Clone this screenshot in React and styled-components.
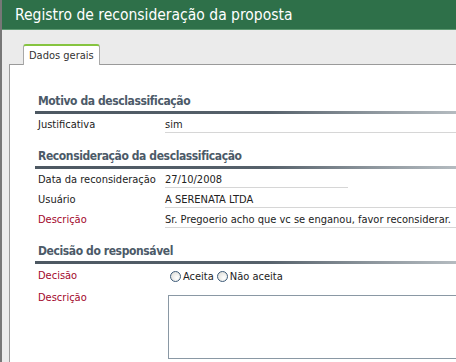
import React from "react";
import styled, { createGlobalStyle } from "styled-components";

const GlobalStyle = createGlobalStyle`
  html, body {
    margin: 0;
    padding: 0;
    background: #ebebeb;
    overflow: hidden;
  }
  body {
    font-family: "DejaVu Sans Condensed", "DejaVu Sans", sans-serif;
    font-size: 11px;
    color: #222;
  }
`;

const Window = styled.div`
  height: 362px;
  border-left: 2px solid #777;
  background: #ebebeb;
  display: flex;
  flex-direction: column;
`;

const TitleBar = styled.div`
  height: 29px;
  background: #2e7049;
  border-bottom: 1px solid #5e9a72;
  display: flex;
  align-items: center;
  padding-left: 13px;
`;

const Title = styled.h1`
  margin: 0;
  font-size: 15.5px;
  font-weight: normal;
  color: #fff;
`;

const TabStrip = styled.div`
  height: 34px;
  display: flex;
  align-items: flex-end;
  padding-left: 14px;
  margin-left: 7px;
  border-bottom: 1px solid #9a9a9a;
`;

const Tab = styled.div`
  height: 19px;
  margin-bottom: -1px;
  padding: 0 5px;
  display: flex;
  align-items: center;
  background: #fff;
  border: 1px solid #a8a8a8;
  border-top: 2px solid #86c440;
  border-bottom: none;
  border-radius: 3px 3px 0 0;
  color: #333;
`;

const Panel = styled.div`
  flex: 1;
  margin-left: 7px;
  border-left: 1px solid #9a9a9a;
  background: #fff;
  padding: 28px 0 0 25px;
`;

const Section = styled.section`
  & + & {
    margin-top: 13px;
  }
`;

const SectionTitle = styled.h2`
  margin: 0;
  padding-left: 3px;
  font-size: 12px;
  letter-spacing: -0.4px;
  line-height: 16px;
  font-weight: bold;
  color: #4c5a68;
`;

const Bar = styled.div`
  height: 3px;
  margin-top: 2px;
  margin-bottom: ${(p) => p.$after}px;
  background: linear-gradient(to right, #4d5862 0%, #56616b 55%, #8d969d 80%, #b4bbc0 100%);
`;

const Row = styled.div`
  display: flex;
  align-items: ${(p) => (p.$top ? "flex-start" : "center")};
  min-height: 20px;
  margin-top: ${(p) => p.$mt || 0}px;
`;

const Label = styled.div`
  width: 127px;
  padding-left: 3px;
  line-height: 14px;
  color: ${(p) => (p.$required ? "#a3072c" : "#222")};
`;

const Value = styled.div`
  flex: ${(p) => (p.$width ? "none" : 1)};
  width: ${(p) => (p.$width ? `${p.$width}px` : "auto")};
  line-height: 14px;
  border-bottom: 1px solid #d6d6d6;
  color: #222;
  white-space: nowrap;
`;

const Radios = styled.div`
  display: flex;
  align-items: center;
  padding-left: 5px;
  gap: 3px;
`;

const RadioLabel = styled.label`
  display: flex;
  align-items: center;
  gap: 2px;
  color: #222;
`;

const RadioDot = styled.span`
  width: 11px;
  height: 11px;
  border-radius: 50%;
  border: 1px solid #3c5a78;
  background: radial-gradient(circle at 65% 65%, #fff 0%, #e4e4e0 70%, #d0d0cc 100%);
  box-sizing: border-box;
`;

const TextBox = styled.div`
  flex: 1;
  height: 62px;
  margin-top: 4px;
  margin-left: 3px;
  border: 1px solid #8a98a4;
  border-right: none;
  background: #fff;
`;

export default function App() {
  return (
    <>
      <GlobalStyle />
      <Window>
        <TitleBar>
          <Title>Registro de reconsideração da proposta</Title>
        </TitleBar>
        <TabStrip>
          <Tab>Dados gerais</Tab>
        </TabStrip>
        <Panel>
          <Section>
            <SectionTitle>Motivo da desclassificação</SectionTitle>
            <Bar $after={1} />
            <Row>
              <Label>Justificativa</Label>
              <Value>sim</Value>
            </Row>
          </Section>
          <Section>
            <SectionTitle>Reconsideração da desclassificação</SectionTitle>
            <Bar $after={1} />
            <Row>
              <Label>Data da reconsideração</Label>
              <Value $width={183}>27/10/2008</Value>
            </Row>
            <Row>
              <Label>Usuário</Label>
              <Value>A SERENATA LTDA</Value>
            </Row>
            <Row>
              <Label $required>Descrição</Label>
              <Value>Sr. Pregoerio acho que vc se enganou, favor reconsiderar.</Value>
            </Row>
          </Section>
          <Section>
            <SectionTitle>Decisão do responsável</SectionTitle>
            <Bar $after={2} />
            <Row>
              <Label $required>Decisão</Label>
              <Radios>
                <RadioLabel>
                  <RadioDot />
                  Aceita
                </RadioLabel>
                <RadioLabel>
                  <RadioDot />
                  Não aceita
                </RadioLabel>
              </Radios>
            </Row>
            <Row $top $mt={5}>
              <Label $required>Descrição</Label>
              <TextBox />
            </Row>
          </Section>
        </Panel>
      </Window>
    </>
  );
}
